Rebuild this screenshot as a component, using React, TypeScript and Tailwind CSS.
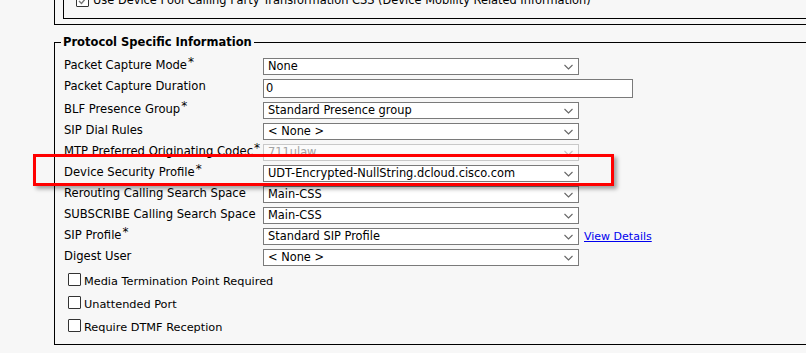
type Row = {
  label: string;
  req?: boolean;
  kind: "select" | "input";
  value: string;
  disabled?: boolean;
  link?: string;
};

const rows: Row[] = [
  { label: "Packet Capture Mode", req: true, kind: "select", value: "None" },
  { label: "Packet Capture Duration", kind: "input", value: "0" },
  { label: "BLF Presence Group", req: true, kind: "select", value: "Standard Presence group" },
  { label: "SIP Dial Rules", kind: "select", value: "< None >" },
  { label: "MTP Preferred Originating Codec", req: true, kind: "select", value: "711ulaw", disabled: true },
  { label: "Device Security Profile", req: true, kind: "select", value: "UDT-Encrypted-NullString.dcloud.cisco.com" },
  { label: "Rerouting Calling Search Space", kind: "select", value: "Main-CSS" },
  { label: "SUBSCRIBE Calling Search Space", kind: "select", value: "Main-CSS" },
  { label: "SIP Profile", req: true, kind: "select", value: "Standard SIP Profile", link: "View Details" },
  { label: "Digest User", kind: "select", value: "< None >" },
];

const checks = ["Media Termination Point Required", "Unattended Port", "Require DTMF Reception"];

function Chevron({ light }: { light?: boolean }) {
  return (
    <svg width="9" height="6" viewBox="0 0 9 6" className="shrink-0">
      <polyline
        points="0.5,1 4.5,5 8.5,1"
        fill="none"
        stroke={light ? "#c4c4c4" : "#666"}
        strokeWidth="1.1"
      />
    </svg>
  );
}

function Select({ value, disabled }: { value: string; disabled?: boolean }) {
  return (
    <div
      className={
        disabled
          ? "flex h-[17px] w-[316px] items-center justify-between border border-[#c9c9c9] bg-[#fbfbfb] pl-[4px] pr-[5px] text-[#a3a3a3]"
          : "flex h-[17px] w-[316px] items-center justify-between border border-[#7a7a7a] bg-white pl-[4px] pr-[5px] text-black"
      }
    >
      <span className="whitespace-nowrap text-[11.4px] leading-[15px]">{value}</span>
      <Chevron light={disabled} />
    </div>
  );
}

function Checkbox({ checked }: { checked?: boolean }) {
  return (
    <span className="flex h-[13px] w-[13px] shrink-0 items-center justify-center rounded-[1px] border border-[#333] bg-white">
      {checked && (
        <svg width="9" height="8" viewBox="0 0 9 8">
          <polyline points="1,4 3.5,6.5 8,1" fill="none" stroke="#777" strokeWidth="1.4" />
        </svg>
      )}
    </span>
  );
}

export default function App() {
  return (
    <div className="relative h-[353px] w-full overflow-hidden bg-[#f7f7f7] pl-[54px] font-['DejaVu_Sans',sans-serif] text-[11px] text-black">
      {/* previous section, scrolled past the top */}
      <div className="border-b border-l border-black pb-[5px] pl-[8px]">
        <div className="h-[19px] overflow-hidden border-b border-l border-black pl-[12px]">
          <div className="-mt-[6px] flex items-center gap-[4px]">
            <Checkbox checked />
            <span className="whitespace-nowrap text-[11.4px] leading-[13px]">
              Use Device Pool Calling Party Transformation CSS (Device Mobility Related Information)
            </span>
          </div>
        </div>
      </div>

      <fieldset className="mt-[11px] border border-r-0 border-black pb-[5px] pl-[6px]">
        <legend className="px-[2px] text-[11.5px] font-bold leading-[13px]">Protocol Specific Information</legend>

        <div className="flex flex-col gap-[4px] pl-[3px] pt-[9px]">
          {rows.map((r) => (
            <div key={r.label} className="flex items-start">
              <div className="w-[199px] whitespace-nowrap pt-[1px] text-[11.6px] leading-[13px]">
                {r.label}
                {r.req && <span className="relative -top-[3px] ml-[1px] text-[12px]">*</span>}
              </div>
              {r.kind === "input" ? (
                <div className="flex h-[19px] w-[370px] items-center border border-[#7a7a7a] bg-white pl-[2px] text-[11.4px]">
                  {r.value}
                </div>
              ) : (
                <Select value={r.value} disabled={r.disabled} />
              )}
              {r.link && (
                <a href="#" className="ml-[5px] leading-[17px] text-[#0000ee] underline">
                  {r.link}
                </a>
              )}
            </div>
          ))}
        </div>

        <div className="flex flex-col pt-[4px]">
          {checks.map((c) => (
            <div key={c} className="flex h-[23px] items-start gap-[3px] pl-[7px]">
              <span className="mt-[3px]">
                <Checkbox />
              </span>
              <span className="mt-[5px] whitespace-nowrap text-[11.3px] leading-[13px]">{c}</span>
            </div>
          ))}
        </div>
      </fieldset>

      {/* highlight box drawn over the form */}
      <div className="absolute left-[33px] top-[154px] h-[32px] w-[581px] border-[3px] border-[#ff0000] shadow-[3px_3px_4px_rgba(0,0,0,0.35)]" />
    </div>
  );
}
